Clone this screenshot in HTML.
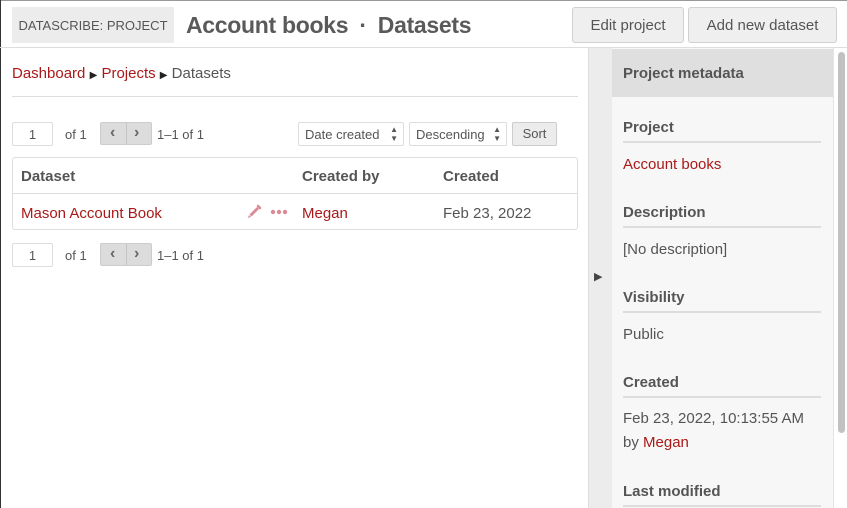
<!DOCTYPE html>
<html><head><meta charset="utf-8"><style>
*{box-sizing:border-box;margin:0;padding:0}
body{width:847px;height:508px;overflow:hidden;background:#fff;font-family:"Liberation Sans",sans-serif;color:#555;position:relative}
.abs{position:absolute}
a{color:#a91919;text-decoration:none}
.btn{position:absolute;background:#efefef;border:1px solid #d0d0d0;border-radius:3px;font-size:15px;color:#555;text-align:center;line-height:36px}
.inp{position:absolute;border:1px solid #ddd;border-radius:2px;font-size:13px;color:#555;background:#fff}
.pg{position:absolute;height:23px;width:52px;background:#dcdcdc;border:1px solid #ccc;border-radius:2px}
.pg span{position:absolute;top:0px;font-size:16px;line-height:20px;color:#666;font-weight:bold}
.lbl{position:absolute;left:623px;width:198px;font-size:15px;font-weight:bold;color:#555;border-bottom:2px solid #ddd;padding-bottom:5px;padding-top:1px}
.val{position:absolute;left:623px;font-size:15px;color:#555}
</style></head><body>
<div class="abs" style="left:0;top:0;width:847px;height:1px;background:#999"></div>
<div class="abs" style="left:0;top:0;width:1px;height:508px;background:#333"></div>
<div class="abs" style="left:12px;top:7px;width:162px;height:36px;background:#ececec;font-size:13px;line-height:37px;text-align:center;color:#555">DATASCRIBE: PROJECT</div>
<div class="abs" style="left:186px;top:12px;font-size:23px;font-weight:bold;color:#5a5a5a;letter-spacing:-0.3px">Account books <span style="margin:0 5px">·</span> Datasets</div>
<div class="btn" style="left:572px;top:7px;width:112px;height:36px">Edit project</div>
<div class="btn" style="left:688px;top:7px;width:149px;height:36px">Add new dataset</div>
<div class="abs" style="left:0;top:47px;width:847px;height:1px;background:#ddd"></div>

<div class="abs" style="left:12px;top:65px;font-size:15px"><a>Dashboard</a> <span style="font-size:10px;color:#222">▶</span> <a>Projects</a> <span style="font-size:10px;color:#222">▶</span> Datasets</div>
<div class="abs" style="left:12px;top:96px;width:566px;height:1px;background:#ddd"></div>

<div class="inp" style="left:12px;top:122px;width:41px;height:24px;text-align:center;line-height:23px">1</div>
<div class="abs" style="left:65px;top:127px;font-size:13px">of 1</div>
<div class="pg" style="left:100px;top:122px"><span style="left:9px">‹</span><span style="left:33px">›</span><div class="abs" style="left:25px;top:0;width:1px;height:21px;background:#c4c4c4"></div></div>
<div class="abs" style="left:157px;top:127px;font-size:13px">1–1 of 1</div>
<div class="inp" style="left:298px;top:122px;width:106px;height:24px;line-height:23px;padding-left:6px">Date created<span style="position:absolute;right:5px;top:0;font-size:8px;line-height:9px;padding-top:2px">▲<br>▼</span></div>
<div class="inp" style="left:409px;top:122px;width:98px;height:24px;line-height:23px;padding-left:6px">Descending<span style="position:absolute;right:5px;top:0;font-size:8px;line-height:9px;padding-top:2px">▲<br>▼</span></div>
<div class="abs" style="left:512px;top:122px;width:45px;height:24px;background:#ececec;border:1px solid #ccc;border-radius:2px;font-size:13px;text-align:center;line-height:22px">Sort</div>

<div class="abs" style="left:12px;top:157px;width:566px;height:73px;border:1px solid #ddd;border-radius:3px"></div>
<div class="abs" style="left:13px;top:193px;width:564px;height:1px;background:#ddd"></div>
<div class="abs" style="left:21px;top:168px;font-size:15px;font-weight:bold">Dataset</div>
<div class="abs" style="left:302px;top:168px;font-size:15px;font-weight:bold">Created by</div>
<div class="abs" style="left:443px;top:168px;font-size:15px;font-weight:bold">Created</div>
<div class="abs" style="left:21px;top:205px;font-size:15px"><a>Mason Account Book</a></div>
<svg class="abs" style="left:246px;top:204px" width="16" height="16" viewBox="0 0 16 16"><path d="M3.5 10.5 L11 3 L13 5 L5.5 12.5 Z" fill="#d98a96"/><path d="M12 2 L14 4" stroke="#d98a96" stroke-width="2.5" stroke-linecap="round"/><path d="M2 14 L3 11 L5 13 Z" fill="#d98a96"/></svg>
<svg class="abs" style="left:270px;top:209px" width="18" height="6" viewBox="0 0 18 6"><circle cx="3" cy="3" r="2.2" fill="#d98a96"/><circle cx="9" cy="3" r="2.2" fill="#d98a96"/><circle cx="15" cy="3" r="2.2" fill="#d98a96"/></svg>
<div class="abs" style="left:302px;top:205px;font-size:15px"><a>Megan</a></div>
<div class="abs" style="left:443px;top:205px;font-size:15px">Feb 23, 2022</div>

<div class="inp" style="left:12px;top:243px;width:41px;height:24px;text-align:center;line-height:23px">1</div>
<div class="abs" style="left:65px;top:248px;font-size:13px">of 1</div>
<div class="pg" style="left:100px;top:243px"><span style="left:9px">‹</span><span style="left:33px">›</span><div class="abs" style="left:25px;top:0;width:1px;height:21px;background:#c4c4c4"></div></div>
<div class="abs" style="left:157px;top:248px;font-size:13px">1–1 of 1</div>

<div class="abs" style="left:588px;top:48px;width:24px;height:460px;background:#ececec;border-left:1px solid #ddd"></div>
<div class="abs" style="left:594px;top:270px;font-size:11px;color:#444">▶</div>
<div class="abs" style="left:612px;top:48px;width:222px;height:460px;background:#f7f7f7;border-right:1px solid #e4e4e4"></div>
<div class="abs" style="left:612px;top:49px;width:221px;height:48px;background:#dfdfdf"></div>
<div class="abs" style="left:623px;top:65px;font-size:15px;font-weight:bold;color:#555">Project metadata</div>
<div class="abs" style="left:838px;top:52px;width:7px;height:381px;background:#c1c1c1;border-radius:4px"></div>

<div class="lbl" style="top:118px">Project</div>
<div class="val" style="top:156px"><a>Account books</a></div>
<div class="lbl" style="top:203px">Description</div>
<div class="val" style="top:241px">[No description]</div>
<div class="lbl" style="top:288px">Visibility</div>
<div class="val" style="top:326px">Public</div>
<div class="lbl" style="top:373px">Created</div>
<div class="val" style="top:407px;line-height:24px">Feb 23, 2022, 10:13:55 AM<br>by <a>Megan</a></div>
<div class="lbl" style="top:482px">Last modified</div>
</body></html>
